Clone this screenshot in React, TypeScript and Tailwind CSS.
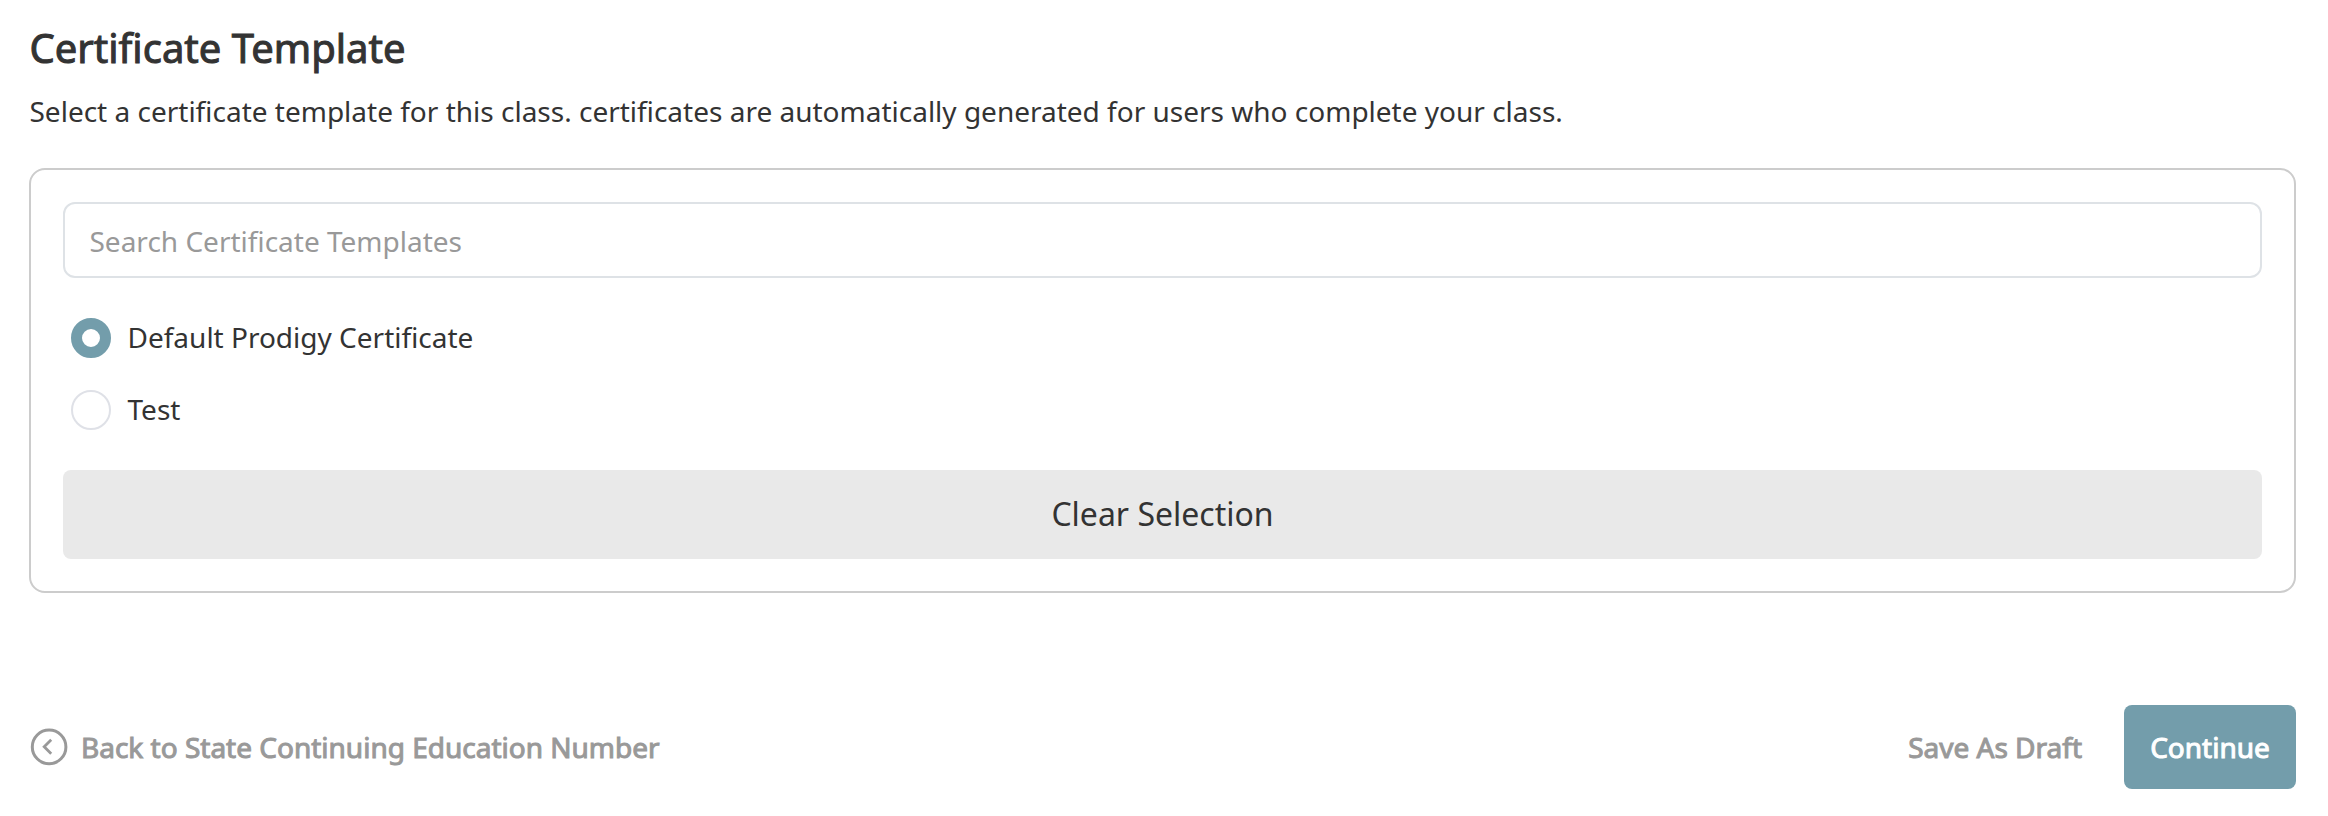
export default function App() {
  return (
    <div className="h-[816px] w-[2328px] bg-white pl-[29px] pr-8 pt-[18px] font-['Noto_Sans',sans-serif] text-[#333333]">
      <h1 className="h-[60px] pl-[0.5px] text-[40px] leading-[60px] [-webkit-text-stroke:1px_#333333]">Certificate Template</h1>
      <p className="mt-[13px] h-10 pl-[0.5px] text-[28px] leading-10">Select a certificate template for this class. certificates are automatically generated for users who complete your class.</p>
      <div className="mt-[37px] h-[425px] rounded-2xl border-2 border-[#cccccc] px-8 pt-8">
        <input placeholder="Search Certificate Templates" className="block h-[76px] w-full rounded-xl border-2 border-[#dee2e6] px-[24.5px] pt-[2px] text-[28px] placeholder:text-[#999999]" />
        <div className="mt-10 flex h-10 items-center gap-4 pl-2">
          <span className="size-10 rounded-full border-[11px] border-[#739dab]" />
          <span className="pb-[2px] pl-[0.5px] text-[28px]">Default Prodigy Certificate</span>
        </div>
        <div className="mt-8 flex h-10 items-center gap-4 pl-2">
          <span className="size-10 rounded-full border-2 border-[#dfe1e7]" />
          <span className="pb-[2px] pl-[0.5px] text-[28px]">Test</span>
        </div>
        <button className="mt-10 block h-[89px] w-full rounded-lg bg-[#e9e9e9] pb-[2px] text-[32px]">Clear Selection</button>
      </div>
      <div className="mt-28 flex h-[84px] items-center text-[28px] text-[#999999]">
        <svg className="size-10" viewBox="0 0 40 40" fill="none" stroke="currentColor" strokeWidth="3"><circle cx="20.1" cy="19.9" r="16.8" /><path d="m22.2 12.8-7 7 7 7" strokeWidth="2.8" /></svg>
        <span className="ml-3 [-webkit-text-stroke:1px_#999999]">Back to State Continuing Education Number</span>
        <span className="ml-auto mr-[42px] [-webkit-text-stroke:1px_#999999]">Save As Draft</span>
        <button className="h-[84px] w-[172px] rounded-lg bg-[#739dab] text-white [-webkit-text-stroke:1px_white]">Continue</button>
      </div>
    </div>
  );
}
